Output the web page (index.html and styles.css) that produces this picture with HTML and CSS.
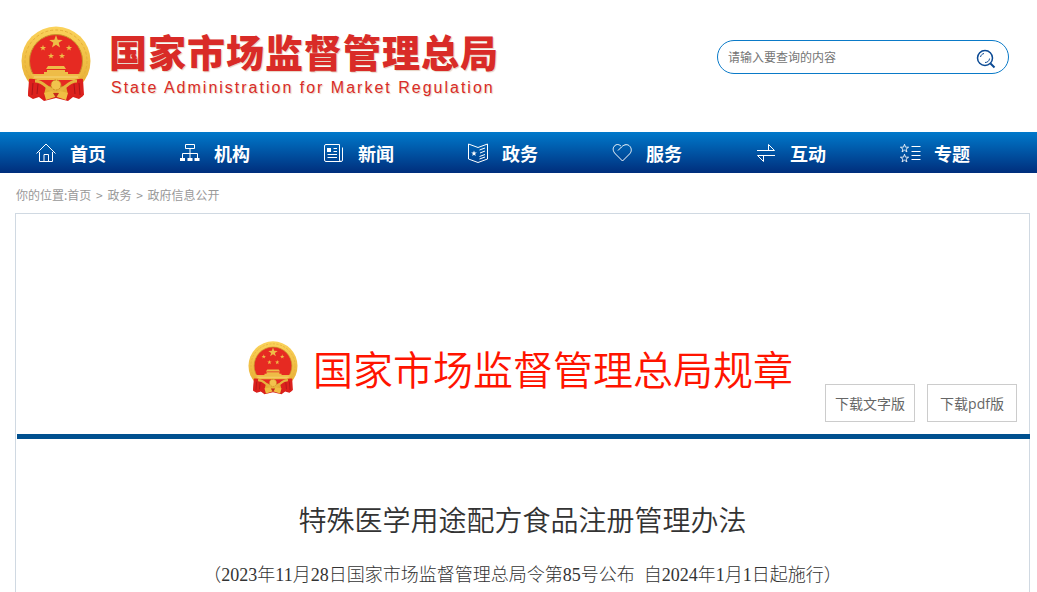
FILE: index.html
```
<!DOCTYPE html>
<html lang="zh-CN">
<head>
    <meta charset="UTF-8">
    <meta name="viewport" content="width=device-width, initial-scale=1.0">
    <title>特殊医学用途配方食品注册管理办法</title>
    <link rel="stylesheet" href="styles.css">
</head>
<body>

<svg class="defs" aria-hidden="true">
    <defs>
        <linearGradient id="gold" x1="0" y1="0" x2="0" y2="1">
            <stop offset="0" stop-color="#fbd35b"/>
            <stop offset="1" stop-color="#e5ab30"/>
        </linearGradient>
        <path id="star" d="M0-5L1.2-1.6 4.8-1.5 1.9.6 2.9 4 0 2-2.9 4-1.9.6-4.8-1.5-1.2-1.6Z"/>
    </defs>
    <symbol id="emblem" viewBox="0 0 70 76">
        <path d="M9 51L7 70 12 73 18 71 23 75 35 72 47 75 52 71 58 73 62 70 61 51Z" fill="#d81e1a"/>
        <circle cx="35" cy="35" r="34.5" fill="url(#gold)"/>
        <circle cx="35" cy="35" r="31" fill="none" stroke="#e5b03a" stroke-width="1" stroke-dasharray="3 2"/>
        <circle cx="35" cy="35" r="26.500" fill="#e62a22" stroke="#c9922a"/>
        <g fill="#eebc47">
            <use href="#star" transform="translate(35 16) scale(1.4)"/>
            <use href="#star" transform="translate(22 22) scale(.65)"/>
            <use href="#star" transform="translate(48 22) scale(.65)"/>
            <use href="#star" transform="translate(30 30) scale(.65)"/>
            <use href="#star" transform="translate(41 30) scale(.65)"/>
            <path d="M27 40H43L45 43H25ZM26 44H44V46H47V48H60L57 54H13L10 48H23V46H26Z"/>
        </g>
        <path d="M13 51H57" stroke="#f7d779"/>
        <path d="M8 53C14 52 21 55 25 60L22 73 17 70 12 72 7 69ZM62 53C56 52 49 55 45 60L48 73 53 70 58 72 63 69Z" fill="#dc211d"/>
        <path d="M12 57L11 69M17 58L16 68M58 57L59 69M53 58L54 68" stroke="#aa1518"/>
        <path d="M14 55C25 55 25 65 35 65S45 55 56 55" fill="none" stroke="#e7b33f" stroke-width="3"/>
        <circle cx="35" cy="59" r="5" fill="#f2c34d" stroke="#c88a20" stroke-dasharray="2 1"/>
        <path d="M23 67L31 65 35 69 39 65 47 67 45 74 36 71 34 71 25 74Z" fill="#f0bd43"/>
        <path d="M32 67L35 72 38 67Z" fill="#c52a1c"/>
    </symbol>
</svg>

<header class="header">
    <a class="logo" href="#">
        <svg class="logo-emblem" aria-hidden="true"><use href="#emblem"/></svg>
        <span class="logo-text">
            <span class="logo-cn">国家市场监督管理总局</span>
            <span class="logo-en">State Administration for Market Regulation</span>
        </span>
    </a>
    <form class="search" role="search">
        <input type="text" placeholder="请输入要查询的内容" aria-label="搜索">
        <button type="button" aria-label="查询">
            <svg viewBox="0 0 20 20" aria-hidden="true">
                <circle cx="9" cy="9" r="7.5"/>
                <path d="M14.5 14.5L18.5 18.5" stroke-width="2"/>
                <path d="M4.5 8C5 6 6 5 8 4.5M9 13.5C11.5 13.5 13.3 12 13.6 9.5" stroke-width="1"/>
            </svg>
        </button>
    </form>
</header>

<nav class="nav">
    <a href="#">
        <svg viewBox="0 0 20 20"><path d="M.5 10.5L10 1 19.5 10.5M3.5 9V18.5H16.5V9M8 18V11.5H12.5V18"/></svg>
        首页
    </a>
    <a href="#">
        <svg viewBox="0 0 20 20"><path d="M5.500 1.500H14.500V5.500H5.500ZM10 6V10.500M2.500 15V10.500H17.500V15M10 10.500V15"/><path class="solid" d="M0 15H5V18H0ZM7.500 15H12.500V18H7.500ZM14.500 15H19.500V18H14.500Z"/></svg>
        机构
    </a>
    <a href="#">
        <svg viewBox="0 0 20 20"><path d="M2 1.500H15.500V17Q15.500 18.500 17 18.500H2Q.5 18.500 .5 17V3Q.5 1.500 2 1.500ZM18.500 4.500V17Q18.500 18.500 17 18.500M9.500 5.500H13M9.500 8.500H13M3.500 11.500H13M3.500 14.500H13"/><path class="solid" d="M3 5H7V9H3Z"/></svg>
        新闻
    </a>
    <a href="#">
        <svg viewBox="0 0 20 20"><path d="M.5 1L10 4.500 19.500 1V16L10 19.500 .5 16ZM11.500 7L17 5M12 10L17 8M11.500 13.500L17 11.500M11.500 16L17 14"/><use class="solid" href="#star" transform="translate(6 10.500) scale(.6)"/></svg>
        政务
    </a>
    <a href="#">
        <svg viewBox="0 0 20 20"><path d="M6 7.500L9.500 4C12.500 1 16 1 18 3.500S19.500 9 17.500 11L10.500 18 3.500 11C.5 8 .5 4.500 3 2.500S7.500 2 9 3"/></svg>
        服务
    </a>
    <a href="#">
        <svg viewBox="0 0 20 20"><path d="M1 7.500H18.500L12.500 1.500V7M19 12.500H1.500L7.500 18.500V13"/></svg>
        互动
    </a>
    <a href="#">
        <svg viewBox="0 0 20 20"><use href="#star" transform="translate(4.500 5.500) scale(.85)"/><use href="#star" transform="translate(4.500 15.500) scale(.85)"/><path d="M11.500 3.500H20.500M11.500 8.500H20.500M11.500 12.500H20.500M11.500 16.500H20.500"/></svg>
        专题
    </a>
</nav>

<div class="position">
    你的位置:<a href="#">首页</a> <span>&gt;</span> <a href="#">政务</a> <span>&gt;</span> <a href="#">政府信息公开</a>
</div>

<main class="content">
    <div class="content-head">
        <div class="rule-title">
            <svg class="rule-emblem" aria-hidden="true"><use href="#emblem"/></svg>
            <h1>国家市场监督管理总局规章</h1>
        </div>
        <div class="download">
            <button type="button">下载文字版</button>
            <button type="button">下载pdf版</button>
        </div>
    </div>
    <article class="article">
        <h2>特殊医学用途配方食品注册管理办法</h2>
        <p>（2023年11月28日国家市场监督管理总局令第85号公布&nbsp; 自2024年1月1日起施行）</p>
    </article>
</main>

</body>
</html>
```
FILE: styles.css
```
* {
    box-sizing: border-box;
}
body {
    margin: 0;
    background-color: #fff;
    color: #333;
    font-family: "Open Sans", "Noto Sans CJK SC", sans-serif;
}
a {
    color: inherit;
    text-decoration: none;
}
button {
    cursor: pointer;
}
.defs {
    position: absolute;
    width: 0;
    height: 0;
}
.header {
    display: flex;
    align-items: flex-start;
    justify-content: space-between;
    height: 132px;
    padding: 26px 28px 0 21px;
}
.logo {
    display: flex;
    gap: 18px;
    color: #d92b27;
}
.logo-emblem {
    width: 70px;
    height: 76px;
}
.logo-text {
    display: flex;
    flex-direction: column;
    gap: 6px;
    padding-top: 4px;
    text-shadow: 1px 1px 1px #e5d3c4;
}
.logo-cn {
    font-family: "Noto Sans CJK SC", sans-serif;
    font-size: 38px;
    font-weight: 900;
    line-height: 42px;
    letter-spacing: 1px;
}
.logo-en {
    padding-left: 2px;
    font-family: "Liberation Sans", sans-serif;
    font-size: 16px;
    line-height: 20px;
    letter-spacing: 2px;
}
.search {
    display: flex;
    align-items: center;
    width: 292px;
    height: 34px;
    margin-top: 14px;
    padding: 0 12px 0 10px;
    border: 1px solid #0a7ac8;
    border-radius: 17px;
}
.search input {
    flex: 1;
    min-width: 0;
    padding: 0;
    border: none;
    outline: none;
    background: none;
    font-family: inherit;
    font-size: 12px;
}
.search input::placeholder {
    color: #757575;
}
.search button {
    width: 20px;
    height: 20px;
    padding: 0;
    border: none;
    background: none;
}
.search svg {
    display: block;
    margin-top: 2px;
    fill: none;
    stroke: #0b4a94;
    stroke-width: 1.5;
}
.nav {
    display: grid;
    grid-template-columns: repeat(7, 1fr);
    padding: 0 14px 0 15px;
    background: linear-gradient(#0079cb, #002e7c);
}
.nav a {
    display: flex;
    align-items: center;
    gap: 14px;
    height: 41px;
    padding-left: 21px;
    color: #fff;
    font-family: "Noto Sans CJK SC", sans-serif;
    font-size: 18px;
    font-weight: bold;
}
.nav svg {
    width: 20px;
    height: 20px;
    overflow: visible;
    fill: none;
    stroke: #fff;
    stroke-width: 1;
}
.nav .solid {
    fill: #fff;
    stroke: none;
}
.position {
    padding: 12px 16px 8px;
    color: #999;
    font-family: "Noto Sans CJK SC", sans-serif;
    font-size: 12px;
    line-height: 20px;
}
.position span {
    margin: 0 2px;
}
.content {
    margin: 0 7px 0 15px;
    border: 1px solid #d0d9e2;
    border-bottom: none;
}
.content-head {
    display: grid;
    grid-template-columns: 1fr auto 1fr;
    align-items: end;
    margin: 0 -1px 0 1px;
    padding: 124px 6px 12px 0;
    border-bottom: 5px solid #00508f;
}
.rule-title {
    display: flex;
    grid-column: 2;
    align-items: center;
    gap: 15px;
    margin-bottom: 24px;
}
.rule-emblem {
    width: 50px;
    height: 54px;
}
.rule-title h1 {
    margin: 0;
    color: #ff1400;
    font-family: "Noto Sans CJK SC", sans-serif;
    font-size: 40px;
    font-weight: 350;
    line-height: 60px;
}
.download {
    display: flex;
    justify-content: flex-end;
    gap: 12px;
    padding-right: 7px;
}
.download button {
    width: 90px;
    height: 38px;
    padding: 0;
    border: 1px solid #ccc;
    background-color: #fff;
    color: #666;
    font-family: inherit;
    font-size: 14px;
}
.article {
    padding: 60px 0 20px;
    text-align: center;
}
.article h2 {
    margin: 0 0 24px;
    font-family: "Noto Sans CJK SC", sans-serif;
    font-size: 28px;
    font-weight: 350;
    line-height: 40px;
}
.article p {
    margin: 0;
    font-family: "Liberation Serif", "Noto Sans CJK SC", serif;
    font-size: 18px;
    font-weight: 300;
    line-height: 24px;
}
```
